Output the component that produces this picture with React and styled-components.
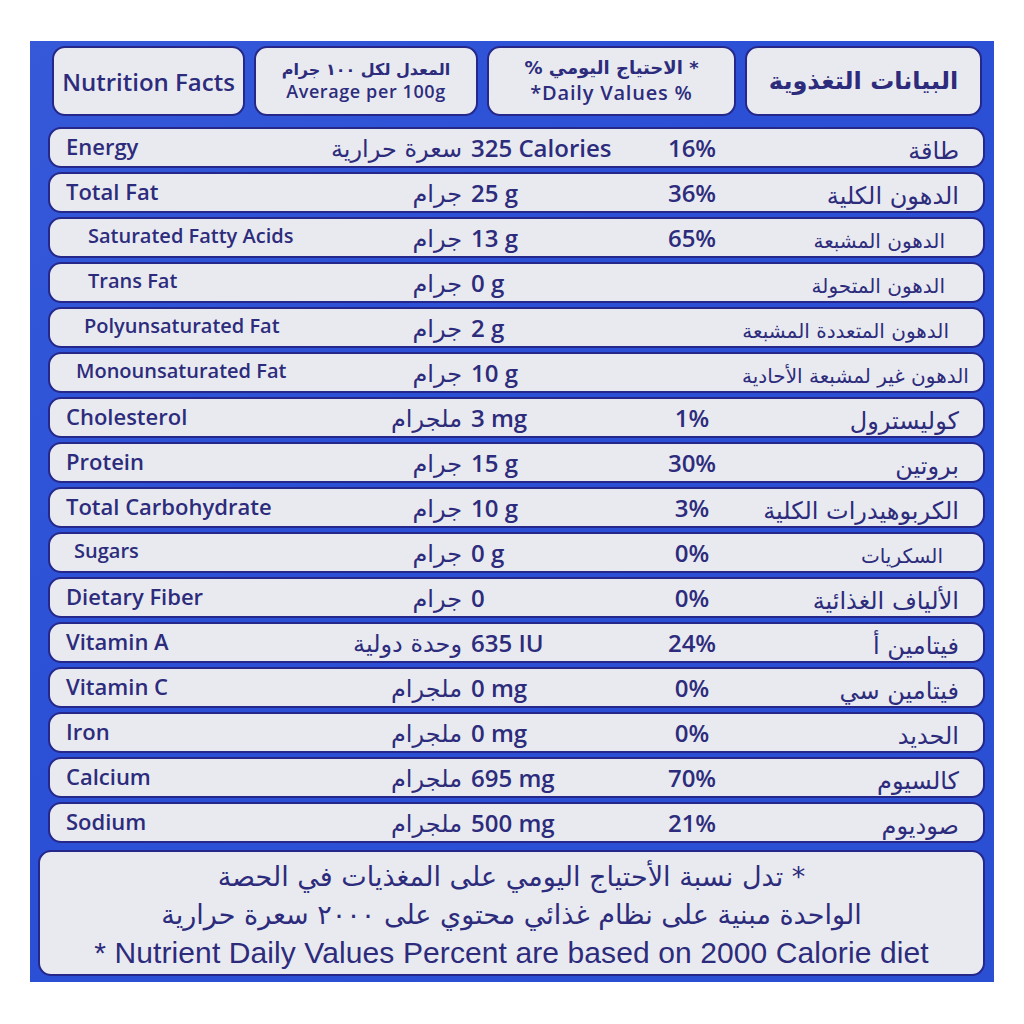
import React from "react";
import styled, { createGlobalStyle } from "styled-components";

const Global = createGlobalStyle`
  html, body { margin: 0; padding: 0; background: #ffffff; }
  body { font-family: "Open Sans", "DejaVu Sans", sans-serif; }
`;

const INK = "#2d2c7c";
const AR = `"DejaVu Sans", "Noto Sans", sans-serif`;
const EN = `"Open Sans", "DejaVu Sans", sans-serif`;

const Page = styled.div`
  width: 1024px;
  height: 1024px;
  padding: 41px 30px 0 30px;
  box-sizing: border-box;
`;

const Panel = styled.div`
  width: 964px;
  height: 941px;
  box-sizing: border-box;
  background: linear-gradient(135deg, #3559d8 0%, #2b50d6 40%, #2a4fd3 100%);
  padding: 5px 9px 0 18px;
  display: flex;
  flex-direction: column;
`;

const Header = styled.div`
  display: flex;
  gap: 9px;
  margin-left: 4px;
  height: 70px;
  margin-bottom: 11px;
`;

const Box = styled.div`
  background: #e9eaf0;
  border: 2px solid #25278a;
  border-radius: 13px;
  box-sizing: border-box;
`;

const HeadBox = styled(Box)`
  width: ${(p) => p.$w}px;
  display: flex;
  flex-direction: column;
  align-items: center;
  justify-content: center;
  color: ${INK};
  gap: 2px;
`;

const HeadTitle = styled.div`
  font-family: ${(p) => (p.$ar ? AR : EN)};
  font-size: ${(p) => p.$size}px;
  font-weight: ${(p) => (p.$ar ? 700 : 600)};
  direction: ${(p) => (p.$ar ? "rtl" : "ltr")};
  letter-spacing: ${(p) => p.$ls || 0}px;
`;

const HeadLine = styled.div`
  font-family: ${(p) => (p.$ar ? AR : EN)};
  font-size: ${(p) => p.$size}px;
  font-weight: ${(p) => (p.$ar ? 700 : 600)};
  direction: ${(p) => (p.$ar ? "rtl" : "ltr")};
  letter-spacing: ${(p) => p.$ls || 0}px;
  line-height: 1.2;
`;

const Rows = styled.div`
  display: flex;
  flex-direction: column;
  gap: 4px;
`;

const Row = styled(Box)`
  height: 41px;
  display: grid;
  grid-template-columns: 260px 152px 180px 100px 1fr;
  align-items: center;
  color: ${INK};
`;

const EnLabel = styled.div`
  font-family: ${EN};
  font-size: ${(p) => p.$size || 22}px;
  font-weight: 600;
  padding-left: ${(p) => 16 + (p.$indent || 0)}px;
  white-space: nowrap;
  margin-top: -4px;
`;

const Unit = styled.div`
  font-family: ${AR};
  font-size: 24px;
  font-weight: 400;
  direction: rtl;
  text-align: right;
  white-space: nowrap;
  margin-top: 2px;
`;

const Amount = styled.div`
  font-family: ${EN};
  font-size: 24px;
  font-weight: 600;
  padding-left: 9px;
  white-space: nowrap;
`;

const Pct = styled.div`
  font-family: ${EN};
  font-size: 24px;
  font-weight: 600;
  text-align: center;
`;

const ArLabel = styled.div`
  font-family: ${AR};
  font-size: ${(p) => p.$size || 24}px;
  font-weight: 400;
  direction: rtl;
  text-align: right;
  padding-right: ${(p) => 24 + (p.$indent || 0)}px;
  white-space: nowrap;
  margin-top: 6px;
`;

const Footer = styled(Box)`
  margin-top: 7px;
  margin-left: -10px;
  height: 126px;
  display: flex;
  flex-direction: column;
  align-items: center;
  justify-content: center;
  color: ${INK};
  padding-top: 4px;
`;

const FootAr = styled.div`
  font-family: ${AR};
  font-size: 27px;
  direction: rtl;
  line-height: 38px;
  white-space: nowrap;
`;

const FootEn = styled.div`
  font-family: "Liberation Sans", sans-serif;
  font-size: 30px;
  line-height: 38px;
  white-space: nowrap;
  letter-spacing: 0.1px;
`;

const rows = [
  { en: "Energy", ar: "طاقة", unit: "سعرة حرارية", amt: "325 Calories", pct: "16%" },
  { en: "Total Fat", ar: "الدهون الكلية", unit: "جرام", amt: "25 g", pct: "36%" },
  { en: "Saturated Fatty Acids", ar: "الدهون المشبعة", unit: "جرام", amt: "13 g", pct: "65%", indent: 22, size: 20, arIndent: 14 },
  { en: "Trans Fat", ar: "الدهون المتحولة", unit: "جرام", amt: "0 g", pct: "", indent: 22, size: 20, arIndent: 14 },
  { en: "Polyunsaturated Fat", ar: "الدهون المتعددة المشبعة", unit: "جرام", amt: "2 g", pct: "", indent: 18, size: 20, arIndent: 10 },
  { en: "Monounsaturated Fat", ar: "الدهون غير لمشبعة الأحادية", unit: "جرام", amt: "10 g", pct: "", indent: 10, size: 20, arIndent: 10 },
  { en: "Cholesterol", ar: "كوليسترول", unit: "ملجرام", amt: "3 mg", pct: "1%" },
  { en: "Protein", ar: "بروتين", unit: "جرام", amt: "15 g", pct: "30%" },
  { en: "Total Carbohydrate", ar: "الكربوهيدرات الكلية", unit: "جرام", amt: "10 g", pct: "3%" },
  { en: "Sugars", ar: "السكريات", unit: "جرام", amt: "0 g", pct: "0%", indent: 8, size: 20, arIndent: 16 },
  { en: "Dietary Fiber", ar: "الألياف الغذائية", unit: "جرام", amt: "0", pct: "0%" },
  { en: "Vitamin A", ar: "فيتامين أ", unit: "وحدة دولية", amt: "635 IU", pct: "24%" },
  { en: "Vitamin C", ar: "فيتامين سي", unit: "ملجرام", amt: "0 mg", pct: "0%" },
  { en: "Iron", ar: "الحديد", unit: "ملجرام", amt: "0 mg", pct: "0%" },
  { en: "Calcium", ar: "كالسيوم", unit: "ملجرام", amt: "695 mg", pct: "70%" },
  { en: "Sodium", ar: "صوديوم", unit: "ملجرام", amt: "500 mg", pct: "21%" },
];

export default function App() {
  return (
    <Page>
      <Global />
      <Panel>
        <Header>
          <HeadBox $w={193}>
            <HeadTitle $size={24}>Nutrition Facts</HeadTitle>
          </HeadBox>
          <HeadBox $w={224}>
            <HeadLine $ar $size={16}>المعدل لكل ١٠٠ جرام</HeadLine>
            <HeadLine $size={18} $ls={0.6}>Average per 100g</HeadLine>
          </HeadBox>
          <HeadBox $w={249}>
            <HeadLine $ar $size={18}>* الاحتياج اليومي %</HeadLine>
            <HeadLine $size={20} $ls={0.8}>*Daily Values %</HeadLine>
          </HeadBox>
          <HeadBox $w={237}>
            <HeadTitle $ar $size={24}>البيانات التغذوية</HeadTitle>
          </HeadBox>
        </Header>
        <Rows>
          {rows.map((r) => (
            <Row key={r.en}>
              <EnLabel $indent={r.indent} $size={r.size}>{r.en}</EnLabel>
              <Unit>{r.unit}</Unit>
              <Amount>{r.amt}</Amount>
              <Pct>{r.pct}</Pct>
              <ArLabel $indent={r.arIndent} $size={r.size}>{r.ar}</ArLabel>
            </Row>
          ))}
        </Rows>
        <Footer>
          <FootAr>* تدل نسبة الأحتياج اليومي على المغذيات في الحصة</FootAr>
          <FootAr>الواحدة مبنية على نظام غذائي محتوي على ٢٠٠٠ سعرة حرارية</FootAr>
          <FootEn>* Nutrient Daily Values Percent are based on 2000 Calorie diet</FootEn>
        </Footer>
      </Panel>
    </Page>
  );
}
